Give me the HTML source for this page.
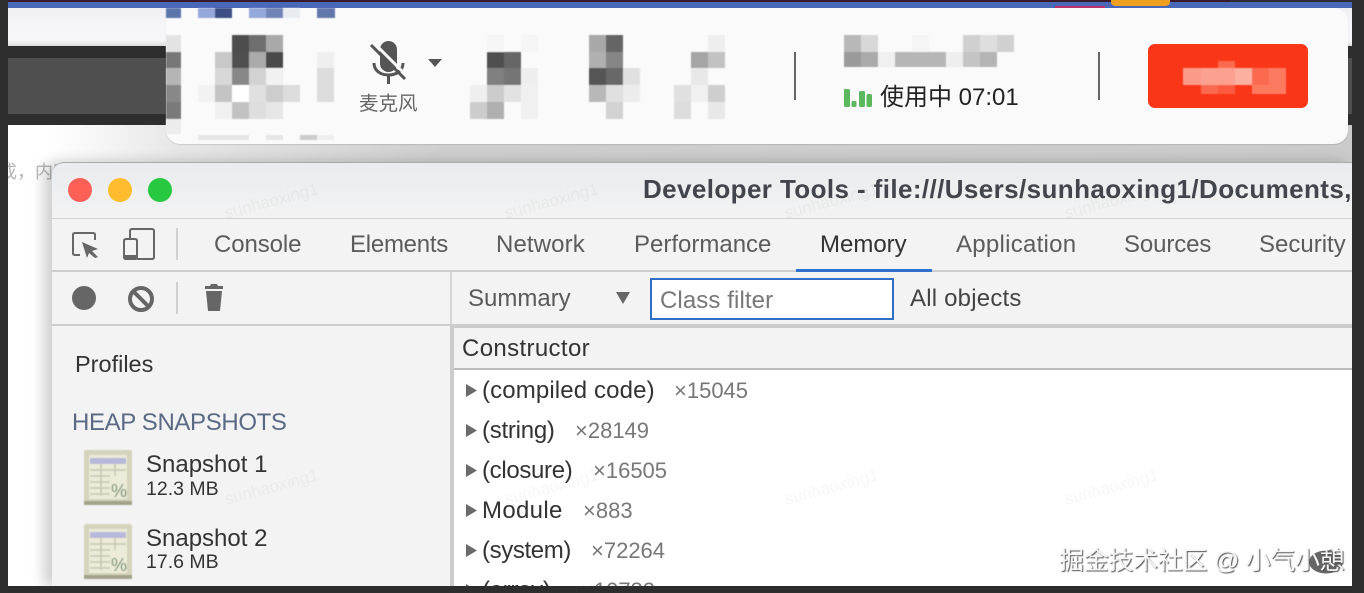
<!DOCTYPE html>
<html lang="zh"><head><meta charset="utf-8"><title>Developer Tools</title>
<style>
html,body{margin:0;padding:0;width:1364px;height:593px;overflow:hidden;background:#2d2d2d}
body{position:relative;font-family:"Liberation Sans","Noto Sans CJK SC",sans-serif}
.b{position:absolute}
.t{position:absolute;white-space:nowrap;line-height:30px;height:30px;font-size:24px;color:#333}
.tab{color:#5c5c5c;top:230px}
.c{color:#777;font-size:22px}
.w{position:absolute;white-space:nowrap;font-size:17px;line-height:20px;color:rgba(0,0,0,.035);transform:rotate(-15deg);transform-origin:left center}
svg{position:absolute;left:0;top:0}
</style></head><body>
<div class="b" style="left:8px;top:2px;width:1344px;height:584px;background:#fff;overflow:hidden">
<div class="b" style="left:0;top:0;width:1344px;height:6px;background:#4a68b8"></div>
<div class="b" style="left:0;top:6px;width:1344px;height:38px;background:linear-gradient(#eeeef4,#f5f5f7 35%,#f7f7f9 85%,#ddd)"></div>
<div class="b" style="left:0;top:44px;width:1344px;height:12px;background:#2e2e2e"></div>
<div class="b" style="left:0;top:56px;width:1344px;height:56px;background:#4f4f4f"></div>
<div class="b" style="left:0;top:112px;width:1344px;height:11px;background:#2e2e2e"></div>
<div class="b" style="left:44px;top:123px;width:1300px;height:37px;background:linear-gradient(to right,rgba(203,203,203,0),#e6e6e6 10%,#cfcfcf 30%,#cbcbcb)"></div>
<div class="t" style="left:-9px;top:155px;font-size:18px;color:#b5b5b5">成，内容</div>
</div>
<!-- window -->
<div class="b" style="left:52px;top:162px;width:1300px;height:424px;background:#f3f3f3;border-radius:12px 0 0 0;box-shadow:-8px 0 14px rgba(0,0,0,.2)"></div>
<div class="b" style="left:52px;top:162px;width:1300px;height:57px;border-radius:12px 0 0 0;background:linear-gradient(#e9ebee,#f3f3f3);border-top:1px solid #aaa;box-sizing:border-box"></div>
<div class="b" style="left:52px;top:218px;width:1300px;height:1px;background:#d2d2d2"></div>
<div class="b" style="left:52px;top:270px;width:1300px;height:2px;background:#cdcdcd"></div>
<div class="b" style="left:52px;top:324px;width:398px;height:2px;background:#cdcdcd"></div>
<div class="b" style="left:450px;top:272px;width:2px;height:54px;background:#d5d5d5"></div>
<div class="b" style="left:450px;top:324px;width:902px;height:4px;background:#cccccc"></div>
<div class="b" style="left:450px;top:326px;width:4px;height:260px;background:#cccccc"></div>
<div class="b" style="left:454px;top:368px;width:898px;height:218px;background:#fff"></div>
<div class="b" style="left:454px;top:368px;width:898px;height:2px;background:#bbb"></div>
<div class="b" style="left:796px;top:269px;width:136px;height:3px;background:#2f6fd0"></div>
<div class="b" style="left:650px;top:278px;width:244px;height:42px;box-sizing:border-box;background:#fff;border:2px solid #2f6fc8"></div>

<!-- title & tabs -->
<div class="t" style="left:643px;top:174px;font-size:26px;font-weight:bold;color:#42454b;letter-spacing:.4px">Developer Tools - file:///Users/sunhaoxing1/Documents,</div>
<div class="t tab" style="left:214px;letter-spacing:-.1px">Console</div>
<div class="t tab" style="left:350px;letter-spacing:-.25px">Elements</div>
<div class="t tab" style="left:496px;letter-spacing:.12px">Network</div>
<div class="t tab" style="left:634px">Performance</div>
<div class="t tab" style="left:820px;color:#333">Memory</div>
<div class="t tab" style="left:956px;letter-spacing:.27px">Application</div>
<div class="t tab" style="left:1124px;letter-spacing:-.12px">Sources</div>
<div class="t tab" style="left:1259px">Security</div>

<div class="t" style="left:75px;top:349px;font-size:23.5px">Profiles</div>
<div class="t" style="left:72px;top:408px;color:#5a6a85;letter-spacing:-.36px">HEAP SNAPSHOTS</div>
<div class="t" style="left:146px;top:450px">Snapshot 1</div>
<div class="t" style="left:146px;top:474px;font-size:19.5px">12.3 MB</div>
<div class="t" style="left:146px;top:524px">Snapshot 2</div>
<div class="t" style="left:146px;top:547px;font-size:19.5px">17.6 MB</div>

<div class="t" style="left:468px;top:284px;color:#5a5a5a">Summary</div>
<div class="t" style="left:660px;top:286px;color:#777;letter-spacing:.1px">Class filter</div>
<div class="t" style="left:910px;top:284px;color:#444;letter-spacing:.2px">All objects</div>
<div class="t" style="left:462px;top:334px;letter-spacing:.36px">Constructor</div>

<div class="t" style="left:482px;top:376px;letter-spacing:.13px">(compiled code)</div><div class="t c" style="left:674px;top:376px">×15045</div>
<div class="t" style="left:482px;top:416px;letter-spacing:-.25px">(string)</div><div class="t c" style="left:575px;top:416px">×28149</div>
<div class="t" style="left:482px;top:456px;letter-spacing:-.33px">(closure)</div><div class="t c" style="left:593px;top:456px">×16505</div>
<div class="t" style="left:482px;top:496px;letter-spacing:.33px">Module</div><div class="t c" style="left:583px;top:496px">×883</div>
<div class="t" style="left:482px;top:536px;letter-spacing:-.37px">(system)</div><div class="t c" style="left:591px;top:536px">×72264</div>
<div class="t" style="left:482px;top:576px;letter-spacing:-.3px">(array)</div><div class="t c" style="left:581px;top:576px">×10782</div>

<div class="w" style="left:225px;top:204px">sunhaoxing1</div>
<div class="w" style="left:505px;top:204px">sunhaoxing1</div>
<div class="w" style="left:785px;top:204px">sunhaoxing1</div>
<div class="w" style="left:1065px;top:204px">sunhaoxing1</div>
<div class="w" style="left:225px;top:490px">sunhaoxing1</div>
<div class="w" style="left:505px;top:490px">sunhaoxing1</div>
<div class="w" style="left:785px;top:490px">sunhaoxing1</div>
<div class="w" style="left:1065px;top:490px">sunhaoxing1</div>

<!-- notification panel -->
<div class="b" style="left:166px;top:8px;width:1182px;height:136px;background:#fafafa;border-radius:0 14px 14px 14px;box-shadow:0 1px 1px rgba(0,0,0,.12)"></div>

<svg width="1364" height="593" viewBox="0 0 1364 593" xmlns="http://www.w3.org/2000/svg">
<defs><filter id="bl" x="-2%" y="-2%" width="104%" height="104%"><feGaussianBlur stdDeviation=".5"/></filter></defs>
<!-- top bar details -->
<rect x="8" y="0" width="1222" height="2" fill="#3a1a2a"/>
<path d="M1111 0H1170V2Q1170 6 1164 6H1117Q1111 6 1111 2Z" fill="#f0a020"/>
<rect x="1055" y="6" width="50" height="2" fill="#b8306a"/>
<g filter="url(#bl)">
<!-- mosaic top row -->
<rect x="166" y="8" width="15" height="10" fill="#5c75ab"/><rect x="198" y="8" width="17" height="10" fill="#95a8dc"/><rect x="215" y="8" width="17" height="10" fill="#3b4f85"/><rect x="249" y="8" width="17" height="10" fill="#95a8dc"/><rect x="266" y="8" width="17" height="10" fill="#7084b8"/><rect x="283" y="8" width="17" height="10" fill="#e8ebf0"/><rect x="317" y="8" width="18" height="10" fill="#6278ac"/>
<!-- mosaic 1 -->
<rect x="166" y="35" width="15" height="17" fill="#e3e3e3"/><rect x="232" y="35" width="17" height="17" fill="#4d4d4d"/><rect x="249" y="35" width="17" height="17" fill="#6e6e6e"/><rect x="266" y="35" width="17" height="17" fill="#a9a9a9"/>
<rect x="166" y="52" width="15" height="16" fill="#777"/><rect x="215" y="52" width="17" height="16" fill="#c8c8c8"/><rect x="232" y="52" width="17" height="16" fill="#505050"/><rect x="249" y="52" width="17" height="16" fill="#aaa"/><rect x="266" y="52" width="17" height="16" fill="#4a4a4a"/><rect x="317" y="52" width="17" height="16" fill="#efefef"/>
<rect x="166" y="68" width="15" height="17" fill="#b5b5b5"/><rect x="215" y="68" width="17" height="17" fill="#d8d8d8"/><rect x="232" y="68" width="17" height="17" fill="#888"/><rect x="249" y="68" width="17" height="17" fill="#d2d2d2"/><rect x="266" y="68" width="17" height="17" fill="#f1f1f1"/><rect x="317" y="68" width="17" height="17" fill="#dcdcdc"/>
<rect x="166" y="85" width="15" height="17" fill="#888"/><rect x="198" y="85" width="17" height="17" fill="#f2f2f2"/><rect x="215" y="85" width="17" height="17" fill="#c4c4c4"/><rect x="232" y="85" width="17" height="17" fill="#fff"/><rect x="249" y="85" width="17" height="17" fill="#e0e0e0"/><rect x="266" y="85" width="17" height="17" fill="#cdcdcd"/><rect x="283" y="85" width="17" height="17" fill="#dcdcdc"/><rect x="317" y="85" width="17" height="17" fill="#dcdcdc"/>
<rect x="166" y="102" width="15" height="17" fill="#7a7a7a"/><rect x="215" y="102" width="17" height="17" fill="#f0f0f0"/><rect x="232" y="102" width="17" height="17" fill="#c2c2c2"/><rect x="249" y="102" width="17" height="17" fill="#dedede"/><rect x="266" y="102" width="17" height="17" fill="#e6e6e6"/>
<rect x="166" y="119" width="15" height="15" fill="#ececec"/>
<rect x="198" y="135" width="51" height="5" fill="#e6e6e6"/><rect x="266" y="135" width="17" height="5" fill="#e6e6e6"/><rect x="300" y="135" width="17" height="5" fill="#ccc"/><rect x="317" y="135" width="17" height="5" fill="#eee"/>
<!-- mosaic 2 -->
<rect x="487" y="35" width="17" height="17" fill="#f6f6f6"/><rect x="521" y="35" width="17" height="17" fill="#f6f6f6"/>
<rect x="487" y="52" width="17" height="16" fill="#4f4f4f"/><rect x="504" y="52" width="17" height="16" fill="#666"/>
<rect x="487" y="68" width="17" height="17" fill="#808080"/><rect x="504" y="68" width="17" height="17" fill="#747474"/><rect x="521" y="68" width="17" height="17" fill="#eee"/>
<rect x="470" y="85" width="17" height="17" fill="#efefef"/><rect x="487" y="85" width="17" height="17" fill="#ccc"/><rect x="504" y="85" width="17" height="17" fill="#e2e2e2"/><rect x="521" y="85" width="17" height="17" fill="#f0f0f0"/>
<rect x="470" y="102" width="17" height="17" fill="#ccc"/><rect x="487" y="102" width="17" height="17" fill="#b0b0b0"/><rect x="521" y="102" width="17" height="17" fill="#f0f0f0"/>
<!-- mosaic 3 -->
<rect x="589" y="35" width="17" height="17" fill="#a8a8a8"/><rect x="606" y="35" width="17" height="17" fill="#656565"/>
<rect x="589" y="52" width="17" height="16" fill="#b0b0b0"/><rect x="606" y="52" width="17" height="16" fill="#868686"/>
<rect x="589" y="68" width="17" height="17" fill="#555"/><rect x="606" y="68" width="17" height="17" fill="#676767"/><rect x="623" y="68" width="17" height="17" fill="#e0e0e0"/>
<rect x="589" y="85" width="17" height="17" fill="#b8b8b8"/><rect x="606" y="85" width="17" height="17" fill="#e0e0e0"/><rect x="623" y="85" width="17" height="17" fill="#ececec"/>
<rect x="606" y="102" width="17" height="17" fill="#d2d2d2"/>
<!-- mosaic 4 -->
<rect x="708" y="35" width="17" height="17" fill="#eee"/>
<rect x="691" y="52" width="17" height="16" fill="#a5a5a5"/><rect x="708" y="52" width="17" height="16" fill="#c2c2c2"/>
<rect x="691" y="68" width="17" height="17" fill="#e8e8e8"/>
<rect x="674" y="85" width="17" height="17" fill="#e0e0e0"/><rect x="691" y="85" width="17" height="17" fill="#f0f0f0"/><rect x="708" y="85" width="17" height="17" fill="#cecece"/>
<rect x="674" y="102" width="17" height="17" fill="#dcdcdc"/><rect x="708" y="102" width="17" height="17" fill="#e8e8e8"/>
<!-- mosaic 5 -->
<rect x="844" y="35" width="17" height="17" fill="#b8b8b8"/><rect x="861" y="35" width="17" height="17" fill="#d8d8d8"/><rect x="912" y="35" width="17" height="17" fill="#f5f5f5"/><rect x="963" y="35" width="17" height="17" fill="#d0d0d0"/><rect x="980" y="35" width="17" height="17" fill="#dedede"/><rect x="997" y="35" width="17" height="17" fill="#d0d0d0"/>
<rect x="844" y="52" width="17" height="15" fill="#9a9a9a"/><rect x="861" y="52" width="17" height="15" fill="#aaa"/><rect x="878" y="52" width="17" height="15" fill="#f0f0f0"/><rect x="895" y="52" width="51" height="15" fill="#b6b6b6"/><rect x="946" y="52" width="17" height="15" fill="#eee"/><rect x="963" y="52" width="17" height="15" fill="#c4c4c4"/><rect x="980" y="52" width="17" height="15" fill="#b4b4b4"/>
</g>
<!-- mic icon -->
<rect x="380" y="41" width="17" height="31" rx="8.5" fill="#555"/>
<path d="M374 63C374 71 381 75 388.500 75C396 75 403 71 403 63" fill="none" stroke="#555" stroke-width="3"/>
<path d="M388.500 75V84" stroke="#555" stroke-width="3"/>
<path d="M374 43L408 77" stroke="#fafafa" stroke-width="3"/>
<path d="M371 45L405 79" stroke="#555" stroke-width="3"/>
<path d="M428 59H442L435 67Z" fill="#555"/>
<!-- dividers -->
<rect x="794" y="52" width="2" height="48" fill="#666"/><rect x="1098" y="52" width="2" height="48" fill="#666"/>
<!-- green bars -->
<g fill="#5cb85c"><rect x="844" y="89" width="6" height="18" rx="1.500"/><rect x="851.500" y="101" width="5" height="6" rx="1.500"/><rect x="859" y="91" width="6" height="16" rx="1.500"/><rect x="866.500" y="94" width="5.500" height="13" rx="1.500"/></g>
<!-- red button -->
<rect x="1148" y="44" width="160" height="64" rx="7" fill="#fa3619"/>
<g filter="url(#bl)">
<rect x="1218" y="61" width="17" height="7" fill="#fb6a50"/>
<rect x="1183" y="68" width="18" height="17" fill="#fc9a8a"/><rect x="1201" y="68" width="34" height="17" fill="#fca090"/><rect x="1235" y="68" width="17" height="17" fill="#fcb0a0"/><rect x="1252" y="68" width="17" height="17" fill="#fb6a50"/><rect x="1269" y="68" width="17" height="17" fill="#fc7a60"/>
<rect x="1201" y="85" width="17" height="9" fill="#fb6a50"/><rect x="1218" y="85" width="17" height="9" fill="#fb5a40"/><rect x="1252" y="85" width="34" height="9" fill="#fc7a60"/>
</g>
<!-- traffic lights -->
<circle cx="80" cy="190" r="12" fill="#fe5f57"/><circle cx="120" cy="190" r="12" fill="#febc2e"/><circle cx="160" cy="190" r="12" fill="#28c840"/>
<!-- inspect -->
<path d="M80 255H75Q73 255 73 253V235Q73 233 75 233H93Q95 233 95 235V240" fill="none" stroke="#666" stroke-width="2"/>
<path d="M82 242L98 249L92 251L98 257L95 258L89 253L87 258Z" fill="#666"/>
<!-- device -->
<path d="M130 239V231Q130 229 132 229H152Q154 229 154 231V257Q154 259 152 259H137" fill="none" stroke="#666" stroke-width="2"/>
<path d="M126 239H135Q137 239 137 241V257Q137 259 135 259H126Q124 259 124 257V241Q124 239 126 239Z" fill="none" stroke="#666" stroke-width="2"/>
<rect x="124" y="255" width="13" height="4" fill="#666"/>
<rect x="176" y="228" width="2" height="32" fill="#d0d0d0"/>
<rect x="176" y="282" width="2" height="32" fill="#d0d0d0"/>
<circle cx="84" cy="298" r="12" fill="#666"/>
<circle cx="141" cy="299" r="11" fill="none" stroke="#666" stroke-width="4"/><path d="M133.500 291.500L148.500 306.500" stroke="#666" stroke-width="4"/>
<path d="M206 291H222L220 311H208Z" fill="#666"/><path d="M205 286H210L211 284H217L218 286H223V289H205Z" fill="#666"/>
<path d="M616 292H630L623 304Z" fill="#666"/>
<!-- tree arrows -->
<g fill="#6a6a6a"><path d="M466 384L477 390.500L466 397Z"/><path d="M466 424L477 430.500L466 437Z"/><path d="M466 464L477 470.500L466 477Z"/><path d="M466 504L477 510.500L466 517Z"/><path d="M466 544L477 550.500L466 557Z"/><path d="M466 584L477 590.500L466 597Z"/></g>
<!-- snapshot icons -->
<g filter="url(#bl)">
<rect x="84" y="450" width="48" height="55" rx="2" fill="#d4d4bc"/><rect x="84" y="501" width="48" height="4" fill="#a3a38c"/>
<rect x="89" y="455" width="38" height="44" fill="#ecebd9"/><rect x="90" y="458" width="36" height="6" fill="#b8b8da"/>
<path d="M90 470H126M90 476H110M90 482H110M90 488H110M90 494H110M101 464V496M115 464V476" stroke="#c6c6b0" stroke-width="1.500"/>
<text x="111" y="497" font-size="18" fill="#6f8f70">%</text>
</g>
<g filter="url(#bl)" transform="translate(0,74)">
<rect x="84" y="450" width="48" height="55" rx="2" fill="#d4d4bc"/><rect x="84" y="501" width="48" height="4" fill="#a3a38c"/>
<rect x="89" y="455" width="38" height="44" fill="#ecebd9"/><rect x="90" y="458" width="36" height="6" fill="#b8b8da"/>
<path d="M90 470H126M90 476H110M90 482H110M90 488H110M90 494H110M101 464V496M115 464V476" stroke="#c6c6b0" stroke-width="1.500"/>
<text x="111" y="497" font-size="18" fill="#6f8f70">%</text>
</g>
<ellipse cx="1326" cy="562" rx="17" ry="11.500" fill="#666"/>
</svg>

<div class="t" style="left:359px;top:89px;font-size:19.500px;color:#666">麦克风</div>
<div class="t" style="left:880px;top:83px;font-size:24px;color:#222">使用中 07:01</div>

<!-- bottom watermark -->
<div class="t" style="left:1059px;top:546px;font-size:25px;letter-spacing:-.3px;color:#f6f6f6;text-shadow:1px 1px 1px #555">掘金技术社区 @ 小气小憩</div>

<!-- frame cover -->
<div class="b" style="left:0;top:0;width:8px;height:593px;background:#2d2d2d"></div>
<div class="b" style="left:1352px;top:0;width:12px;height:593px;background:#2d2d2d"></div>
<div class="b" style="left:0;top:586px;width:1364px;height:7px;background:#2d2d2d"></div>
</body></html>
